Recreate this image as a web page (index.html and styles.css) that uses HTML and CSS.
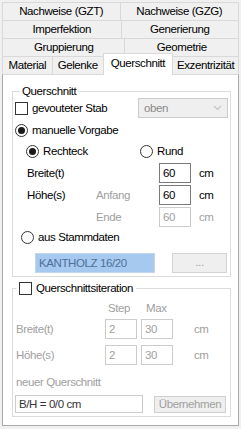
FILE: index.html
```html
<!DOCTYPE html>
<html lang="de">
<head>
    <meta charset="UTF-8">
    <title>Querschnitt</title>
    <link rel="stylesheet" href="styles.css">
</head>
<body>

    <!-- Tabs -->
    <div class="tabs">
        <div class="tab-row">
            <div class="tab" style="width:119px">Nachweise (GZT)</div>
            <div class="tab" style="width:120px">Nachweise (GZG)</div>
        </div>
        <div class="tab-row">
            <div class="tab" style="width:120px">Imperfektion</div>
            <div class="tab" style="width:119px">Generierung</div>
        </div>
        <div class="tab-row">
            <div class="tab" style="width:124px">Gruppierung</div>
            <div class="tab" style="width:115px">Geometrie</div>
        </div>
        <div class="tab-row last">
            <div class="tab" style="width:51px">Material</div>
            <div class="tab" style="width:52px">Gelenke</div>
            <div class="tab active" style="width:71px">Querschnitt</div>
            <div class="tab" style="width:67px">Exzentrizität</div>
        </div>
    </div>

    <!-- Panel -->
    <div class="panel">

        <fieldset class="group first">
            <legend>Querschnitt</legend>

            <div class="row r-voute">
                <span class="check"></span>
                <span class="lbl">gevouteter Stab</span>
                <div class="select">
                    <span>oben</span>
                    <svg width="9" height="6" viewBox="0 0 9 6"><path d="M1 1 L4.5 4.5 L8 1" fill="none" stroke="#c4c4c4" stroke-width="1.2"/></svg>
                </div>
            </div>

            <div class="row r-manuell">
                <span class="radio on"></span>
                <span class="lbl">manuelle Vorgabe</span>
            </div>

            <div class="row r-form">
                <span class="radio on"></span>
                <span class="lbl form-w">Rechteck</span>
                <span class="radio"></span>
                <span class="lbl">Rund</span>
            </div>

            <div class="row r-dim">
                <span class="dim-name wide">Breite(t)</span>
                <span class="input">60</span>
                <span class="unit">cm</span>
            </div>

            <div class="row r-dim">
                <span class="dim-name">Höhe(s)</span>
                <span class="dim-sub">Anfang</span>
                <span class="input">60</span>
                <span class="unit">cm</span>
            </div>

            <div class="row r-dim">
                <span class="dim-name"></span>
                <span class="dim-sub">Ende</span>
                <span class="input off">60</span>
                <span class="unit off">cm</span>
            </div>

            <div class="row r-stamm">
                <span class="radio"></span>
                <span class="lbl">aus Stammdaten</span>
            </div>

            <div class="row r-list">
                <div class="listbox">KANTHOLZ 16/20</div>
                <div class="button dots">...</div>
            </div>
        </fieldset>

        <fieldset class="group second">
            <legend>
                <span class="check"></span>
                <span class="lbl">Querschnittsiteration</span>
            </legend>

            <div class="row r-head">
                <span class="it-name"></span>
                <span class="it-col">Step</span>
                <span class="it-col max">Max</span>
            </div>

            <div class="row r-it">
                <span class="it-name">Breite(t)</span>
                <span class="input off">2</span>
                <span class="input off it-max">30</span>
                <span class="unit off it-unit">cm</span>
            </div>

            <div class="row r-it">
                <span class="it-name">Höhe(s)</span>
                <span class="input off">2</span>
                <span class="input off it-max">30</span>
                <span class="unit off it-unit">cm</span>
            </div>

            <div class="row r-neu">
                <span class="it-name wide">neuer Querschnitt</span>
            </div>

            <div class="row r-apply">
                <span class="input result">B/H = 0/0 cm</span>
                <div class="button apply">Übernehmen</div>
            </div>
        </fieldset>

    </div>

</body>
</html>
```

FILE: styles.css
```css
body {
    font-family: "Liberation Sans", Arial, sans-serif;
    font-size: 11.5px;
    letter-spacing: -0.4px;
    margin: 0;
    padding: 2px 2px 0 2px;
    background-color: #f0f0f0;
    color: #000;
    width: 237px;
    height: 427px;
    overflow: hidden;
}

/* Tabs */
.tab-row {
    display: flex;
    height: 18px;
}

.tab {
    box-sizing: border-box;
    height: 18px;
    border: 1px solid #d9d9d9;
    border-bottom: none;
    background-color: #f0f0f0;
    text-align: center;
    line-height: 17px;
    white-space: nowrap;
}

.tab + .tab {
    margin-left: -1px;
}

.tab.active {
    position: relative;
    z-index: 1;
    height: 22px;
    margin-top: -3px;
    margin-bottom: -1px;
    background-color: #fff;
    border-color: #d9d9d9;
    line-height: 19px;
}

/* Panel */
.panel {
    box-sizing: border-box;
    height: 352px;
    background-color: #fff;
    border: 1px solid #a9a9a9;
    border-top-color: #d9d9d9;
    display: flex;
    flex-direction: column;
}

.group {
    margin: 0 7px 0 9px;
    padding: 0;
    border: 1px solid #dcdcdc;
    min-width: 0;
}

.group.first {
    margin-top: 9px;
    padding-bottom: 3px;
}

.group.second {
    margin-top: 4px;
    padding-bottom: 3px;
}

.group legend {
    padding: 0 2px;
    margin-left: 7px;
    line-height: 14px;
    height: 14px;
}

.group.second legend {
    margin-left: 3px;
    padding: 0 3px;
    display: flex;
    align-items: center;
}

.row {
    display: flex;
    align-items: center;
    height: 20px;
}

/* Check boxes and radios */
.check {
    box-sizing: border-box;
    width: 13px;
    height: 13px;
    border: 1px solid #333;
    background-color: #fff;
    flex-shrink: 0;
}

.radio {
    box-sizing: border-box;
    width: 13px;
    height: 13px;
    border: 1px solid #333;
    border-radius: 50%;
    background-color: #fff;
    flex-shrink: 0;
    display: flex;
    align-items: center;
    justify-content: center;
}

.radio.on::after {
    content: "";
    width: 7px;
    height: 7px;
    border-radius: 50%;
    background-color: #1a1a1a;
}

.lbl {
    margin-left: 4px;
    white-space: nowrap;
}

/* Querschnitt group */
.r-voute {
    padding-left: 2px;
}

.select {
    box-sizing: border-box;
    margin-left: auto;
    margin-right: 2px;
    width: 90px;
    height: 20px;
    border: 1px solid #cccccc;
    background-color: #efefef;
    color: #8a8a8a;
    display: flex;
    align-items: center;
    justify-content: space-between;
    padding: 0 5px 0 5px;
}

.r-manuell {
    margin-top: 2px;
    padding-left: 2px;
}

.r-form {
    margin-top: 1px;
    padding-left: 13px;
}

.form-w {
    width: 97px;
}

.r-dim {
    margin-top: 2px;
    padding-left: 14px;
}

.dim-name {
    width: 69px;
    flex-shrink: 0;
}

.dim-name.wide {
    width: 132px;
}

.dim-sub {
    width: 63px;
    color: #a0a0a0;
    flex-shrink: 0;
}

.input {
    box-sizing: border-box;
    width: 32px;
    height: 20px;
    border: 1px solid #7a7a7a;
    background-color: #fff;
    padding-left: 3px;
    line-height: 18px;
    flex-shrink: 0;
}

.input.off {
    border-color: #cccccc;
    color: #a0a0a0;
}

.unit {
    margin-left: 8px;
}

.unit.off {
    color: #a0a0a0;
}

.r-stamm {
    padding-left: 8px;
}

.r-list {
    margin-top: 6px;
    padding-left: 22px;
}

.listbox {
    box-sizing: border-box;
    width: 120px;
    height: 20px;
    background-color: #a6c9ef;
    border: 1px solid #c3d6ea;
    color: #4f6f99;
    line-height: 18px;
    padding-left: 3px;
}

.button {
    box-sizing: border-box;
    height: 20px;
    border: 1px solid #d3d3d3;
    background-color: #efefef;
    color: #a0a0a0;
    text-align: center;
    line-height: 17px;
}

.button.dots {
    width: 55px;
    margin-left: 17px;
}

/* Querschnittsiteration group */
.r-head {
    margin-top: 4px;
    height: 18px;
    color: #a0a0a0;
    padding-left: 3px;
}

.it-name {
    width: 89px;
    flex-shrink: 0;
    color: #a0a0a0;
    white-space: nowrap;
}

.it-name.wide {
    width: auto;
}

.it-col {
    width: 36px;
    padding-left: 3px;
    box-sizing: border-box;
}

.it-col.max {
    padding-left: 5px;
}

.r-it {
    margin-top: 2px;
    padding-left: 3px;
}

.r-it + .r-it {
    margin-top: 6px;
}

.it-max {
    margin-left: 4px;
}

.it-unit {
    margin-left: 21px;
}

.r-neu {
    margin-top: 7px;
    padding-left: 3px;
}

.r-apply {
    margin-top: 3px;
    height: 18px;
    padding-left: 2px;
}

.input.result {
    width: 128px;
    height: 18px;
    line-height: 16px;
    border-color: #cccccc;
    color: #333;
}

.button.apply {
    width: 72px;
    height: 17px;
    margin-left: 11px;
    line-height: 15px;
    border-color: #cfcfcf;
}
```
